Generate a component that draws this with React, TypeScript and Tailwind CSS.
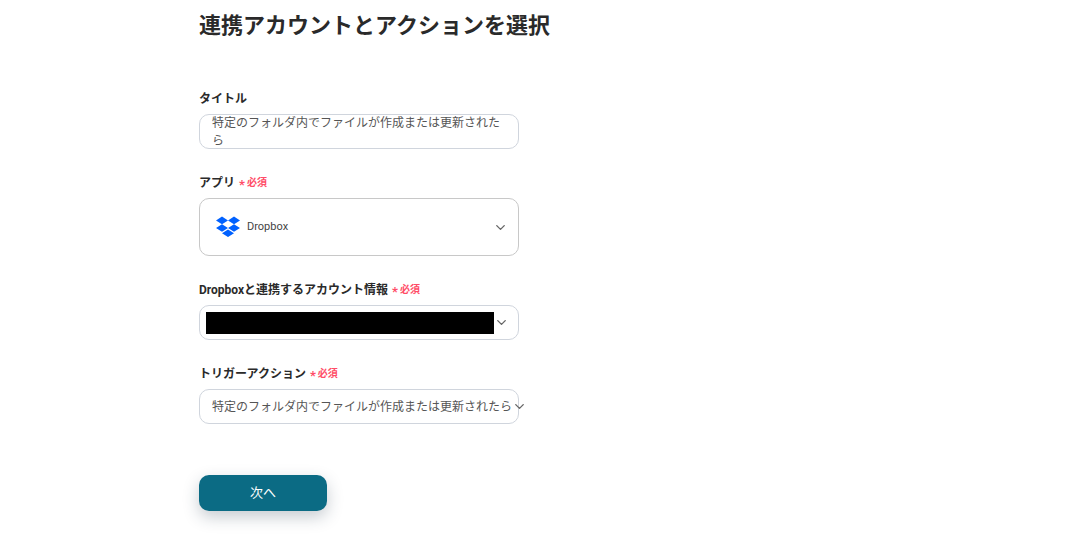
import { ChevronDown } from 'lucide-react';

const font = { fontFamily: '"Roboto", "Noto Sans CJK JP", sans-serif' };

function Required() {
  return (
    <span className="ml-1 flex items-center text-[#ff4d67]">
      <span className="mt-[3px] text-[13px] leading-none font-bold">*</span>
      <span className="ml-[2px] text-[10px] leading-none font-bold">必須</span>
    </span>
  );
}

function Label({ text, required }: { text: string; required?: boolean }) {
  return (
    <div className="flex h-[16px] items-center text-[12px] leading-none font-bold text-[#2a2a2a]">
      <span>{text}</span>
      {required && <Required />}
    </div>
  );
}

function Chevron() {
  return <ChevronDown className="h-[15px] w-[15px] shrink-0 text-[#666666]" strokeWidth={2.2} />;
}

function DropboxLogo() {
  return (
    <svg viewBox="0 0 24 24" className="h-[24px] w-[24px] shrink-0" fill="#0061ff">
      <path d="M6 1.6 0 5.4l6 3.8 6-3.8zM18 1.6l-6 3.8 6 3.8 6-3.8zM0 13l6 3.8L12 13 6 9.2zM18 9.2 12 13l6 3.8 6-3.8zM6 18.2l6 3.9 6-3.9-6-3.8z" />
    </svg>
  );
}

export default function App() {
  return (
    <div className="h-[553px] w-[1084px] overflow-hidden bg-white pl-[199px]" style={font}>
      <h1 className="pt-[11px] text-[22px] leading-[30px] font-bold text-[#2a2a2a]">
        連携アカウントとアクションを選択
      </h1>

      <div className="mt-[50px] w-[320px]">
        <Label text="タイトル" />
        <div className="mt-[7px] flex h-[35px] items-center rounded-[10px] border border-[#d0d5dd] px-[12px] text-[12px] text-[#555555]">
          特定のフォルダ内でファイルが作成または更新されたら
        </div>

        <div className="mt-[26px]">
          <Label text="アプリ" required />
        </div>
        <div className="mt-[7px] flex h-[58px] items-center justify-between rounded-[10px] border border-[#c8c8c8] pr-[10px] pl-[16px]">
          <div className="flex items-center gap-[7px] text-[11px] text-[#444444]">
            <DropboxLogo />
            <span>Dropbox</span>
          </div>
          <Chevron />
        </div>

        <div className="mt-[26px]">
          <Label text="Dropboxと連携するアカウント情報" required />
        </div>
        <div className="mt-[7px] flex h-[35px] items-center justify-between rounded-[10px] border border-[#d0d5dd] pr-[9px] pl-[6px]">
          <div className="h-[22px] w-[288px] bg-black" />
          <Chevron />
        </div>

        <div className="mt-[26px]">
          <Label text="トリガーアクション" required />
        </div>
        <div className="mt-[7px] flex h-[35px] items-center justify-between rounded-[10px] border border-[#d0d5dd] pr-[9px] pl-[12px] text-[12px] text-[#555555]">
          <span className="whitespace-nowrap">特定のフォルダ内でファイルが作成または更新されたら</span>
          <Chevron />
        </div>

        <button className="mt-[51px] h-[36px] w-[128px] rounded-[10px] bg-[#0b6b84] text-[13px] text-white shadow-[0_6px_16px_rgba(30,50,70,0.25)]">
          次へ
        </button>
      </div>
    </div>
  );
}
